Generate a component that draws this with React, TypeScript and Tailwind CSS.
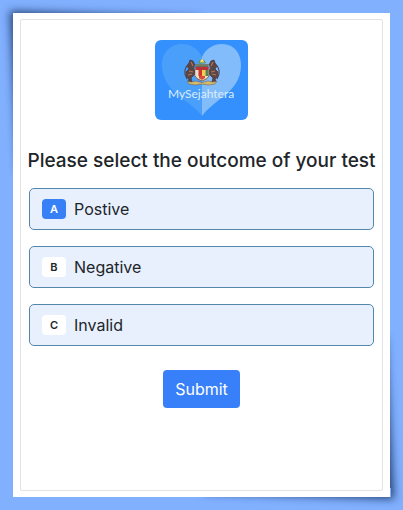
import React, { useState } from 'react';

const options = [
  { key: 'A', label: 'Postive' },
  { key: 'B', label: 'Negative' },
  { key: 'C', label: 'Invalid' },
];

const Logo: React.FC = () => (
  <svg
    viewBox="0 0 93 80"
    className="w-[93px] h-20"
    role="img"
    aria-label="MySejahtera"
  >
    <rect width="93" height="80" rx="6" fill="#3490fc" />

    {/* Heart halves */}
    <path d="M47 17C43 8 35 4 27 4C15 4 7 13 7 25C7 39 15 49 25 57C34 64 42 69 47 76Z" fill="#4a9ffb" />
    <path d="M47 17C51 8 59 4 67 4C79 4 86 13 86 25C86 39 79 48 69 56C59 64 52 69 47 76Z" fill="#82bcfa" />

    {/* Coat of arms */}
    <path d="M43.500 23Q47 16 50.500 23Z" fill="#d9c63c" stroke="#4f8b70" strokeWidth="1" />
    <circle cx="47" cy="20.500" r="1.300" fill="#f3e77b" />
    <path d="M40 24H54L52.500 27H41.500Z" fill="#71806b" />
    <path d="M38 21L35 20L34 23L32 26L34 29L31 32L31.500 37L34 39L33 42L37 42L36 38L39 35L40 31L38 28L40 25Z" fill="#5c4646" stroke="#423c49" strokeWidth="0.8" />
    <path d="M56 21L59 20L60 23L62 26L60 29L63 32L62.500 37L60 39L61 42L57 42L58 38L55 35L54 31L56 28L54 25Z" fill="#5c4646" stroke="#423c49" strokeWidth="0.8" />
    <path d="M36 22L38 26M34 31L38 32M33 35L37 34M58 22L56 26M60 31L56 32M61 35L57 34" stroke="#b5744c" strokeWidth="1.200" />
    <path d="M34 24Q29 28 30 34L32 39M60 24Q65 28 64 34L62 39" fill="none" stroke="#55434b" strokeWidth="1.100" />
    <path d="M40 27H54V36Q53 39 47 41Q41 39 40 36Z" fill="#efdfb1" stroke="#614743" strokeWidth="0.8" />
    <rect x="40.500" y="27" width="13" height="3" fill="#bb3338" />
    <rect x="40.500" y="30" width="3" height="6" fill="#e5e0d2" />
    <rect x="43.500" y="30" width="3.500" height="6" fill="#d3342b" />
    <rect x="47" y="30" width="3.500" height="6" fill="#f2cf4f" />
    <rect x="50.500" y="30" width="3" height="6" fill="#5b7f58" />
    <path d="M44 36H50V38L47 40L44 38Z" fill="#d44c43" />
    <path d="M32 41Q36 43 41 41Q47 44 53 41Q58 43 62 41L60 44Q54 46 47 44Q40 46 34 44Z" fill="#d5ba69" stroke="#70665c" strokeWidth="0.6" />

    <text
      x="46"
      y="58"
      textAnchor="middle"
      fill="#d9ecff"
      className="font-['Lato',sans-serif] font-normal text-[12px]"
    >
      MySejahtera
    </text>
  </svg>
);

export default function App() {
  const [selected, setSelected] = useState('A');

  return (
    <main className="min-h-screen flex bg-[#80b0fe] p-[13px] font-['Inter',sans-serif] text-[#212529] overflow-hidden">
      <div className="relative isolate flex flex-1 min-w-0">
        {/* Lifted corner shadows */}
        <div className="absolute -z-10 left-0 top-0 w-1/2 h-1/3 origin-top-left skew-x-3 skew-y-2 shadow-[-3px_-2px_8px_rgba(0,20,60,0.7)]" />
        <div className="absolute -z-10 right-0 bottom-0 w-1/2 h-1/3 origin-bottom-right skew-x-3 skew-y-2 shadow-[3px_2px_8px_rgba(0,20,60,0.7)]" />

        <div className="flex flex-1 min-w-0 bg-white px-[7px] py-1.5">
          <form
            className="flex-1 min-w-0 flex flex-col items-center border border-[#e2e3e5] rounded-xs px-2 pt-5 pb-6"
            onSubmit={(e) => e.preventDefault()}
          >
            <Logo />

            <fieldset className="w-full min-w-0 mt-7">
              <legend className="w-full flex justify-center text-[19px] leading-[26px] font-medium whitespace-nowrap">
                Please select the outcome of your test
              </legend>

              <div className="flex flex-col gap-4 mt-3.5">
                {options.map((option) => (
                  <label
                    key={option.key}
                    className="group relative flex items-center gap-2 h-[42px] px-3 border border-[#5486ac] rounded-[5px] bg-[#e8f0fe] cursor-pointer has-focus-visible:ring-2"
                  >
                    <input
                      type="radio"
                      name="outcome"
                      value={option.key}
                      checked={selected === option.key}
                      onChange={() => setSelected(option.key)}
                      className="sr-only"
                    />
                    <span className="flex items-center justify-center w-6 h-5 rounded-sm bg-white text-[11px] font-semibold group-has-checked:bg-[#3880f5] group-has-checked:text-white">
                      {option.key}
                    </span>
                    <span className="text-base leading-6">{option.label}</span>
                  </label>
                ))}
              </div>
            </fieldset>

            <button
              type="submit"
              className="mt-6 h-[38px] px-3 rounded-sm bg-[#3880f9] text-white text-base leading-6 cursor-pointer"
            >
              Submit
            </button>
          </form>
        </div>
      </div>
    </main>
  );
}
